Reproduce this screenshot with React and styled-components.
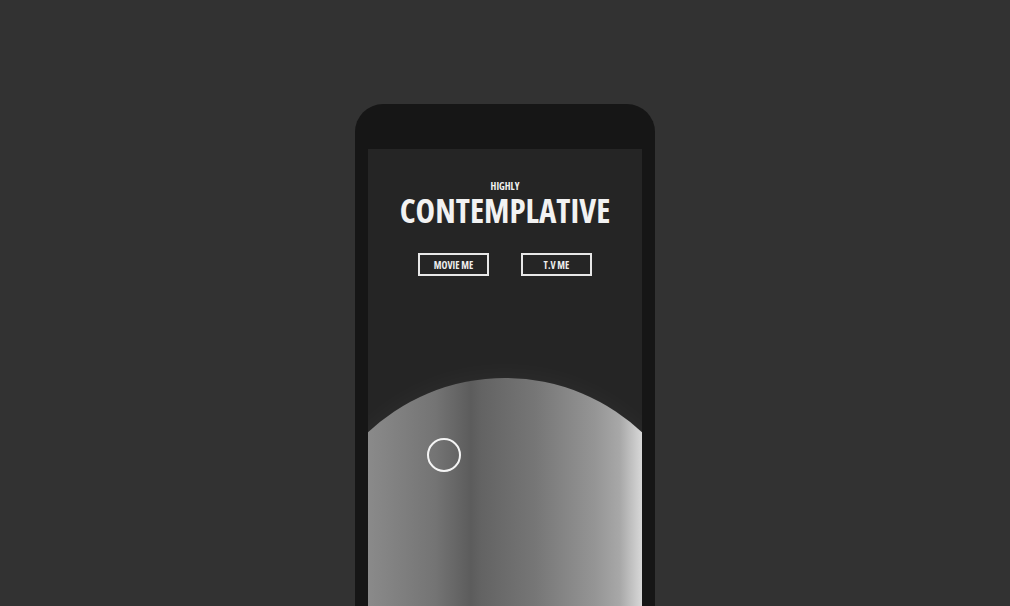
import React from 'react';
import styled, {createGlobalStyle} from 'styled-components';

const GlobalStyle = createGlobalStyle`
    html, body {
        margin: 0;
        padding: 0;
        height: 100%;
        overflow: hidden;
        background: #323232;
    }
`;

const Page = styled.div`
    display: flex;
    justify-content: center;
    padding-top: 104px;
    height: 606px;
    box-sizing: border-box;
    overflow: hidden;
`;

const Phone = styled.div`
    width: 300px;
    height: 640px;
    flex-shrink: 0;
    box-sizing: border-box;
    padding: 45px 13px 0;
    background: #161616;
    border-radius: 28px 28px 0 0;
`;

const Screen = styled.div`
    display: flex;
    flex-direction: column;
    align-items: center;
    height: 100%;
    background: #252525;
    overflow: hidden;
    color: #f2f2f2;
    font-family: "Open Sans", "Noto Sans", sans-serif;
    font-stretch: 75%;
    font-weight: 700;
`;

const Kicker = styled.div`
    margin-top: 31px;
    font-size: 10px;
    line-height: 12px;
`;

const Title = styled.h1`
    margin: 0;
    font-size: 33px;
    line-height: 38px;
    font-weight: 700;
    letter-spacing: 0;
`;

const Buttons = styled.div`
    display: flex;
    gap: 32px;
    margin-top: 23px;
`;

const Button = styled.button`
    width: 71px;
    height: 23px;
    box-sizing: border-box;
    border: 2px solid #e8e8e8;
    background: transparent;
    color: #eee;
    font-family: inherit;
    font-stretch: 75%;
    font-weight: 700;
    font-size: 10px;
    padding: 0;
`;

const Sphere = styled.div`
    position: relative;
    flex-shrink: 0;
    width: 400px;
    height: 400px;
    margin-top: 102px;
    border-radius: 50%;
    background: linear-gradient(90deg,
        #8e8e8e 0px, #8a8a8a 63px, #747474 130px, #5c5c5c 166px,
        #636363 176px, #767676 230px, #959595 290px,
        #a8a8a8 315px, #d8d8d8 337px, #e2e2e2 400px);
    box-shadow: 0 -6px 24px rgba(255, 255, 255, 0.03);
`;

const Ring = styled.div`
    position: absolute;
    left: 122px;
    top: 60px;
    width: 34px;
    height: 34px;
    box-sizing: border-box;
    border: 2px solid #f4f4f4;
    border-radius: 50%;
`;

export default function App() {
    return (
        <>
            <GlobalStyle/>
            <Page>
                <Phone>
                    <Screen>
                        <Kicker>HIGHLY</Kicker>
                        <Title>CONTEMPLATIVE</Title>
                        <Buttons>
                            <Button>MOVIE ME</Button>
                            <Button>T.V ME</Button>
                        </Buttons>
                        <Sphere>
                            <Ring/>
                        </Sphere>
                    </Screen>
                </Phone>
            </Page>
        </>
    );
}
